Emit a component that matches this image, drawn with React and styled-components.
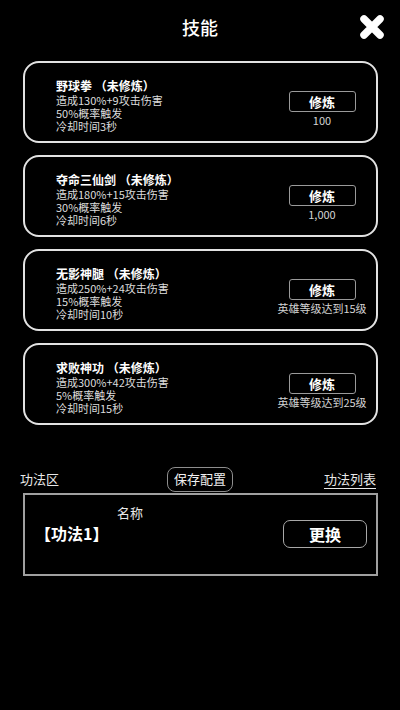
import React from 'react';
import styled, { createGlobalStyle } from 'styled-components';

const GlobalStyle = createGlobalStyle`
  html, body {
    margin: 0;
    padding: 0;
    background: #000;
  }
  body {
    font-family: "Noto Sans CJK SC", "Noto Sans", sans-serif;
    color: #fff;
  }
`;

const Screen = styled.div`
  width: 400px;
  height: 710px;
  background: #000;
  display: flex;
  flex-direction: column;
  overflow: hidden;
`;

const Header = styled.div`
  position: relative;
  height: 61px;
  display: flex;
  justify-content: center;
  padding-top: 14px;
  box-sizing: border-box;
`;

const Title = styled.h1`
  margin: 0;
  font-size: 18px;
  font-weight: 500;
  line-height: 26px;
`;

const CloseButton = styled.button`
  position: absolute;
  top: 14px;
  right: 15px;
  width: 26px;
  height: 26px;
  padding: 0;
  border: none;
  background: none;
  cursor: pointer;
`;

const SkillList = styled.div`
  display: flex;
  flex-direction: column;
  gap: 12px;
  padding: 0 22px 0 23px;
`;

const Card = styled.div`
  height: 82px;
  box-sizing: border-box;
  border: 2px solid #e2e2e2;
  border-radius: 16px;
  display: flex;
  justify-content: space-between;
  padding: 14px 4px 0 31px;
`;

const Info = styled.div`
  display: flex;
  flex-direction: column;
`;

const SkillName = styled.div`
  font-size: 12px;
  font-weight: 700;
  line-height: 17px;
  white-space: pre;
`;

const Line = styled.div`
  font-size: 11px;
  line-height: 13px;
  color: #dcdcdc;
`;

const Action = styled.div`
  width: 100px;
  display: flex;
  flex-direction: column;
  align-items: center;
  padding-top: 14px;
`;

const TrainButton = styled.button`
  width: 67px;
  height: 21px;
  box-sizing: border-box;
  border: 1.5px solid #9a9a9a;
  border-radius: 3px;
  background: #000;
  color: #fff;
  font-family: inherit;
  font-size: 13px;
  font-weight: 700;
  line-height: 18px;
  padding: 0;
`;

const Requirement = styled.div`
  margin-top: 1px;
  font-size: 11px;
  line-height: 15px;
  color: #d4d4d4;
  white-space: nowrap;
`;

const BottomBar = styled.div`
  margin-top: 41px;
  display: flex;
  align-items: center;
  justify-content: space-between;
  padding: 0 24px 0 20px;
  height: 26px;
`;

const Label = styled.span`
  font-size: 13px;
  line-height: 18px;
  color: #e8e8e8;
  width: 80px;
  text-align: ${p => (p.$right ? 'right' : 'left')};
  text-decoration: ${p => (p.$link ? 'underline' : 'none')};
  text-underline-offset: 4px;
`;

const SaveButton = styled.button`
  height: 25px;
  box-sizing: border-box;
  padding: 0 6px;
  border: 1.5px solid #8e8e8e;
  border-radius: 8px;
  background: #000;
  color: #f0f0f0;
  font-family: inherit;
  font-size: 13px;
  line-height: 20px;
  margin-left: 4px;
`;

const SlotBox = styled.div`
  margin: 1px 22px 0 23px;
  height: 83px;
  box-sizing: border-box;
  border: 2px solid #a0a0a0;
  display: grid;
  grid-template-columns: 1fr auto;
  align-items: center;
  padding: 0 9px 0 14px;
`;

const SlotInfo = styled.div`
  display: flex;
  flex-direction: column;
  margin-top: -22px;
`;

const SlotHead = styled.div`
  font-size: 13px;
  line-height: 18px;
  color: #e8e8e8;
  padding-left: 78px;
`;

const SlotName = styled.div`
  font-size: 16px;
  font-weight: 700;
  line-height: 22px;
  margin-left: -4px;
`;

const SwapButton = styled.button`
  width: 84px;
  height: 28px;
  box-sizing: border-box;
  border: 1.5px solid #a8a8a8;
  border-radius: 7px;
  background: #000;
  color: #fff;
  font-family: inherit;
  font-size: 16px;
  font-weight: 700;
  line-height: 24px;
  padding: 0;
  margin-top: -2px;
`;

const CloseIcon = () => (
  <svg width="26" height="26" viewBox="0 0 26 26">
    <path
      d="M5 5 L21 21 M21 5 L5 21"
      stroke="#fff"
      strokeWidth="7.5"
      strokeLinecap="round"
    />
  </svg>
);

const skills = [
  { name: '野球拳', dmg: '造成130%+9攻击伤害', rate: '50%概率触发', cd: '冷却时间3秒', req: '100' },
  { name: '夺命三仙剑', dmg: '造成180%+15攻击伤害', rate: '30%概率触发', cd: '冷却时间6秒', req: '1,000' },
  { name: '无影神腿', dmg: '造成250%+24攻击伤害', rate: '15%概率触发', cd: '冷却时间10秒', req: '英雄等级达到15级' },
  { name: '求败神功', dmg: '造成300%+42攻击伤害', rate: '5%概率触发', cd: '冷却时间15秒', req: '英雄等级达到25级' },
];

const SkillCard = ({ skill }) => (
  <Card>
    <Info>
      <SkillName>{skill.name} （未修炼）</SkillName>
      <Line>{skill.dmg}</Line>
      <Line>{skill.rate}</Line>
      <Line>{skill.cd}</Line>
    </Info>
    <Action>
      <TrainButton>修炼</TrainButton>
      <Requirement>{skill.req}</Requirement>
    </Action>
  </Card>
);

const App = () => (
  <Screen>
    <GlobalStyle />
    <Header>
      <Title>技能</Title>
      <CloseButton aria-label="关闭">
        <CloseIcon />
      </CloseButton>
    </Header>
    <SkillList>
      {skills.map(s => (
        <SkillCard key={s.name} skill={s} />
      ))}
    </SkillList>
    <BottomBar>
      <Label>功法区</Label>
      <SaveButton>保存配置</SaveButton>
      <Label $right $link>
        功法列表
      </Label>
    </BottomBar>
    <SlotBox>
      <SlotInfo>
        <SlotHead>名称</SlotHead>
        <SlotName>【功法1】</SlotName>
      </SlotInfo>
      <SwapButton>更换</SwapButton>
    </SlotBox>
  </Screen>
);

export default App;
